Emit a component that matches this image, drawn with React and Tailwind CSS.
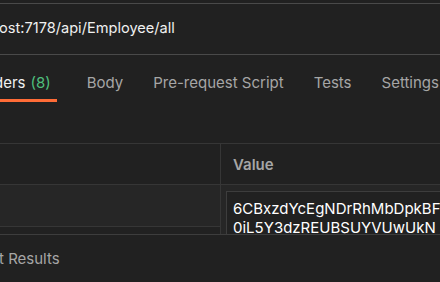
import React from "react";

const tabs = ["Body", "Pre-request Script", "Tests", "Settings"];

export default function App() {
  return (
    <div
      className="w-[440px] h-[282px] overflow-hidden bg-[#212121] text-[#f0f0f0]"
      style={{ fontFamily: "Inter, 'Noto Sans', sans-serif" }}
    >
      <div className="h-[3px]" />
      <div className="h-[52px] border-y border-[#4a4a4a] flex items-center">
        <span className="text-[14.6px] text-[#f0f0f0] whitespace-nowrap ml-[-1px]">
          ost:7178/api/Employee/all
        </span>
      </div>

      <div className="h-[48px] flex items-stretch text-[15px] whitespace-nowrap ml-[-6px]">
        <div className="relative flex items-center pr-[6px] pt-[9px]">
          <span className="text-[#f0f0f0]">ders</span>
          <span className="ml-[5px] text-[#4fbf7d]">(8)</span>
          <div className="absolute left-0 right-0 bottom-[1px] h-[3px] bg-[#ff6c37]" />
        </div>
        {tabs.map((t) => (
          <div key={t} className="flex items-center pt-[9px] ml-[30px] text-[#a6a6a6]">
            {t}
          </div>
        ))}
      </div>

      <div className="h-[40px]" />

      <div className="h-[91px] overflow-hidden border-t border-[#363636]">
        <div className="flex h-[41px] border-b border-[#363636]">
          <div className="w-[221px] border-r border-[#363636]" />
          <div className="flex items-center pl-[12px] pt-[3px] text-[15px] font-semibold text-[#a6a6a6]">
            Value
          </div>
        </div>
        <div className="flex">
          <div className="w-[221px] shrink-0">
            <div className="h-[42px] bg-[#262626] border-r border-b border-[#363636]" />
            <div className="h-[20px] border-r border-[#363636]" />
          </div>
          <div className="flex-1 bg-[#262626] pl-[5px] pt-[6px] overflow-hidden">
            <div className="border-l border-t border-[#3d3d3d] bg-[#212121] h-[60px] pl-[6px] pt-[7px] text-[15px] leading-[19px] text-[#ffffff] whitespace-nowrap">
              <div>6CBxzdYcEgNDrRhMbDpkBF</div>
              <div>0iL5Y3dzREUBSUYVUwUkN</div>
            </div>
          </div>
        </div>
      </div>

      <div className="border-t border-[#3d3d3d] h-[47px] flex items-center pt-[2px]">
        <span className="text-[15px] text-[#a6a6a6] whitespace-nowrap ml-[-1px]">t Results</span>
      </div>
    </div>
  );
}
